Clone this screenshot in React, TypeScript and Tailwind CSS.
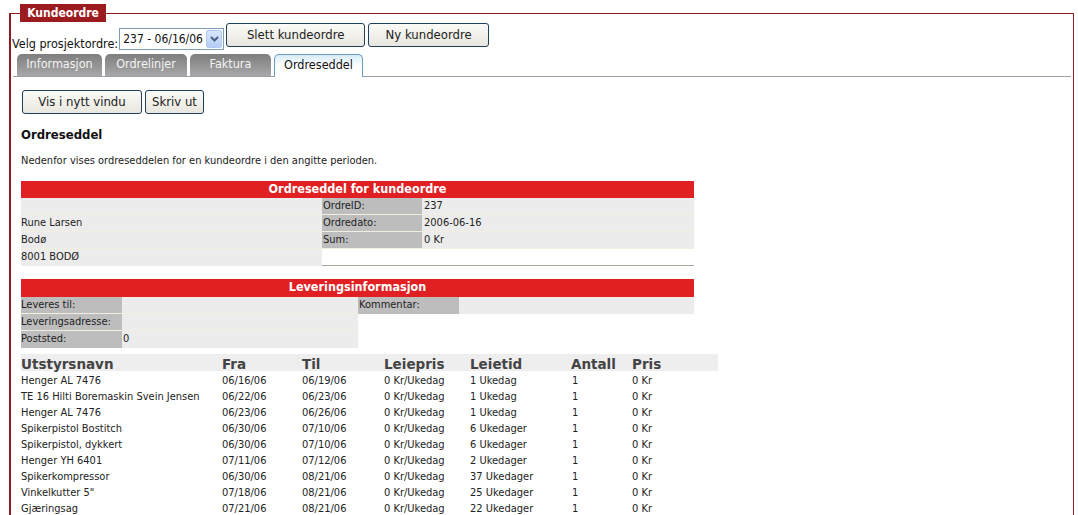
const font = "font-['DejaVu_Sans_Condensed','DejaVu_Sans',sans-serif]";

const items = [
  ["Henger AL 7476", "06/16/06", "06/19/06", "0 Kr/Ukedag", "1 Ukedag", "1", "0 Kr"],
  ["TE 16 Hilti Boremaskin Svein Jensen", "06/22/06", "06/23/06", "0 Kr/Ukedag", "1 Ukedag", "1", "0 Kr"],
  ["Henger AL 7476", "06/23/06", "06/26/06", "0 Kr/Ukedag", "1 Ukedag", "1", "0 Kr"],
  ["Spikerpistol Bostitch", "06/30/06", "07/10/06", "0 Kr/Ukedag", "6 Ukedager", "1", "0 Kr"],
  ["Spikerpistol, dykkert", "06/30/06", "07/10/06", "0 Kr/Ukedag", "6 Ukedager", "1", "0 Kr"],
  ["Henger YH 6401", "07/11/06", "07/12/06", "0 Kr/Ukedag", "2 Ukedager", "1", "0 Kr"],
  ["Spikerkompressor", "06/30/06", "08/21/06", "0 Kr/Ukedag", "37 Ukedager", "1", "0 Kr"],
  ["Vinkelkutter 5\"", "07/18/06", "08/21/06", "0 Kr/Ukedag", "25 Ukedager", "1", "0 Kr"],
  ["Gjæringsag", "07/21/06", "08/21/06", "0 Kr/Ukedag", "22 Ukedager", "1", "0 Kr"],
];

const cols = "grid grid-cols-[201px_80px_82px_86px_101px_61px_86px]";

function Btn({ label, w }: { label: string; w: string }) {
  return (
    <button
      type="button"
      className={`${w} h-[24px] rounded-[3px] border border-[#1f3f5f] bg-gradient-to-b from-[#fbfbf8] to-[#e8e6de] text-[13px] text-[#222]`}
    >
      {label}
    </button>
  );
}

function Tab({ label, w, active }: { label: string; w: string; active?: boolean }) {
  if (active) {
    return (
      <div
        className={`${w} -mb-px flex h-[23px] items-center justify-center rounded-t-[5px] border border-b-0 border-[#6a9bc0] bg-gradient-to-b from-[#d6ecf8] via-white to-white text-[12.5px] text-[#111]`}
      >
        {label}
      </div>
    );
  }
  return (
    <div
      className={`${w} flex h-[22px] items-center justify-center rounded-t-[5px] bg-gradient-to-b from-[#7e7e7e] to-[#a8a8a8] text-[12.5px] text-[#f4f4f4]`}
    >
      {label}
    </div>
  );
}

export default function App() {
  return (
    <div className={`${font} h-[515px] w-[1078px] overflow-hidden bg-white text-[11px] text-[#222]`}>
      <fieldset className="ml-[9px] mt-[4px] h-[600px] w-[1065px] border border-l-2 border-[#8d1c22] px-0 pb-0">
        <legend className="ml-[9px] flex h-[18px] w-[86px] items-center justify-center bg-[#9b1b1f] text-[12px] font-bold text-white">
          Kundeordre
        </legend>

        <div className="flex items-start pl-[1px] pt-[1px]">
          <span className="mt-[12px] text-[12.5px] text-[#111]">Velg prosjektordre:</span>
          <div className="ml-[1px] mt-[5px] flex h-[22px] w-[105px] items-center justify-between border border-[#7f9db9] bg-white pl-[3px] pr-[1px] text-[12px] text-[#111]">
            <span>237 - 06/16/06</span>
            <div className="flex h-[18px] w-[16px] items-center justify-center rounded-[2px] border border-[#b4c8f0] bg-gradient-to-b from-[#d8e6fc] to-[#b6cdf6]">
              <svg width="9" height="6" viewBox="0 0 9 6">
                <path d="M1 1 L4.5 4.5 L8 1" stroke="#4d6185" strokeWidth="2" fill="none" />
              </svg>
            </div>
          </div>
          <div className="ml-[2px] flex gap-[3px]">
            <Btn label="Slett kundeordre" w="w-[139px]" />
            <Btn label="Ny kundeordre" w="w-[121px]" />
          </div>
        </div>

        <div className="ml-[2px] mr-[2px] flex items-end gap-[3px] border-b border-[#9aa3ab] pl-[4px]">
          <Tab label="Informasjon" w="w-[85px]" />
          <Tab label="Ordrelinjer" w="w-[82px]" />
          <Tab label="Faktura" w="w-[81px]" />
          <Tab label="Ordreseddel" w="w-[89px]" active />
        </div>

        <div className="pl-[10px] pt-[13px]">
          <div className="flex gap-[3px] pl-[1px]">
            <Btn label="Vis i nytt vindu" w="w-[120px]" />
            <Btn label="Skriv ut" w="w-[59px]" />
          </div>

          <div className="mt-[11px] text-[13px] font-bold text-[#111]">Ordreseddel</div>
          <div className="mt-[9px] text-[11px] text-[#222]">
            Nedenfor vises ordreseddelen for en kundeordre i den angitte perioden.
          </div>

          <div className="mt-[11px] w-[673px]">
            <div className="flex h-[17px] items-center justify-center bg-[#e02022] text-[12.5px] font-bold text-white">
              Ordreseddel for kundeordre
            </div>
            <div className="grid grid-cols-[301px_100px_272px] text-[11px] text-[#222]">
              <div className="h-[17px] border-b border-[#f3efe0] bg-[#ececec]" />
              <div className="flex h-[17px] items-center border-b border-[#f3efe0] bg-[#bdbdbd] pl-[1px]">OrdreID:</div>
              <div className="flex h-[17px] items-center border-b border-[#f3efe0] bg-[#ececec] pl-[2px]">237</div>
              <div className="flex h-[17px] items-center border-b border-[#f3efe0] bg-[#ececec]">Rune Larsen</div>
              <div className="flex h-[17px] items-center border-b border-[#f3efe0] bg-[#bdbdbd] pl-[1px]">Ordredato:</div>
              <div className="flex h-[17px] items-center border-b border-[#f3efe0] bg-[#ececec] pl-[2px]">2006-06-16</div>
              <div className="flex h-[17px] items-center border-b border-[#f3efe0] bg-[#ececec]">Bodø</div>
              <div className="flex h-[17px] items-center border-b border-[#f3efe0] bg-[#bdbdbd] pl-[1px]">Sum:</div>
              <div className="flex h-[17px] items-center border-b border-[#f3efe0] bg-[#ececec] pl-[2px]">0 Kr</div>
              <div className="flex h-[17px] items-center bg-[#ececec]">8001 BODØ</div>
              <div className="col-span-2 h-[17px] border-b border-[#a9a79c] bg-white" />
            </div>
          </div>

          <div className="mt-[13px] w-[673px]">
            <div className="flex h-[18px] items-center justify-center bg-[#e02022] text-[12.5px] font-bold text-white">
              Leveringsinformasjon
            </div>
            <div className="grid grid-cols-[101px_236px_101px_235px] text-[11px] text-[#222]">
              <div className="flex h-[17px] items-center border-b border-[#f3efe0] bg-[#bdbdbd]">Leveres til:</div>
              <div className="h-[17px] border-b border-[#f3efe0] bg-[#ececec]" />
              <div className="flex h-[17px] items-center bg-[#bdbdbd] pl-[1px]">Kommentar:</div>
              <div className="h-[17px] bg-[#ececec]" />
              <div className="flex h-[17px] items-center border-b border-[#f3efe0] bg-[#bdbdbd]">Leveringsadresse:</div>
              <div className="h-[17px] border-b border-[#f3efe0] bg-[#ececec]" />
              <div className="col-span-2" />
              <div className="flex h-[17px] items-center bg-[#bdbdbd]">Poststed:</div>
              <div className="flex h-[17px] items-center bg-[#ececec] pl-[1px]">0</div>
              <div className="col-span-2" />
            </div>
          </div>

          <div className="mt-[6px] w-[697px]">
            <div className={`${cols} h-[17px] items-center bg-[#eeeeee] font-['DejaVu_Sans',sans-serif] text-[13.5px] font-bold text-[#444]`}>
              <div>Utstyrsnavn</div>
              <div>Fra</div>
              <div>Til</div>
              <div>Leiepris</div>
              <div>Leietid</div>
              <div>Antall</div>
              <div>Pris</div>
            </div>
            <div className="pt-[2px]">
              {items.map((r, i) => (
                <div key={i} className={`${cols} h-[16px] items-center text-[11px] text-[#222]`}>
                  {r.map((c, j) => (
                    <div key={j} className={j === 5 ? "pl-[1px]" : ""}>
                      {c}
                    </div>
                  ))}
                </div>
              ))}
            </div>
          </div>
        </div>
      </fieldset>
    </div>
  );
}
